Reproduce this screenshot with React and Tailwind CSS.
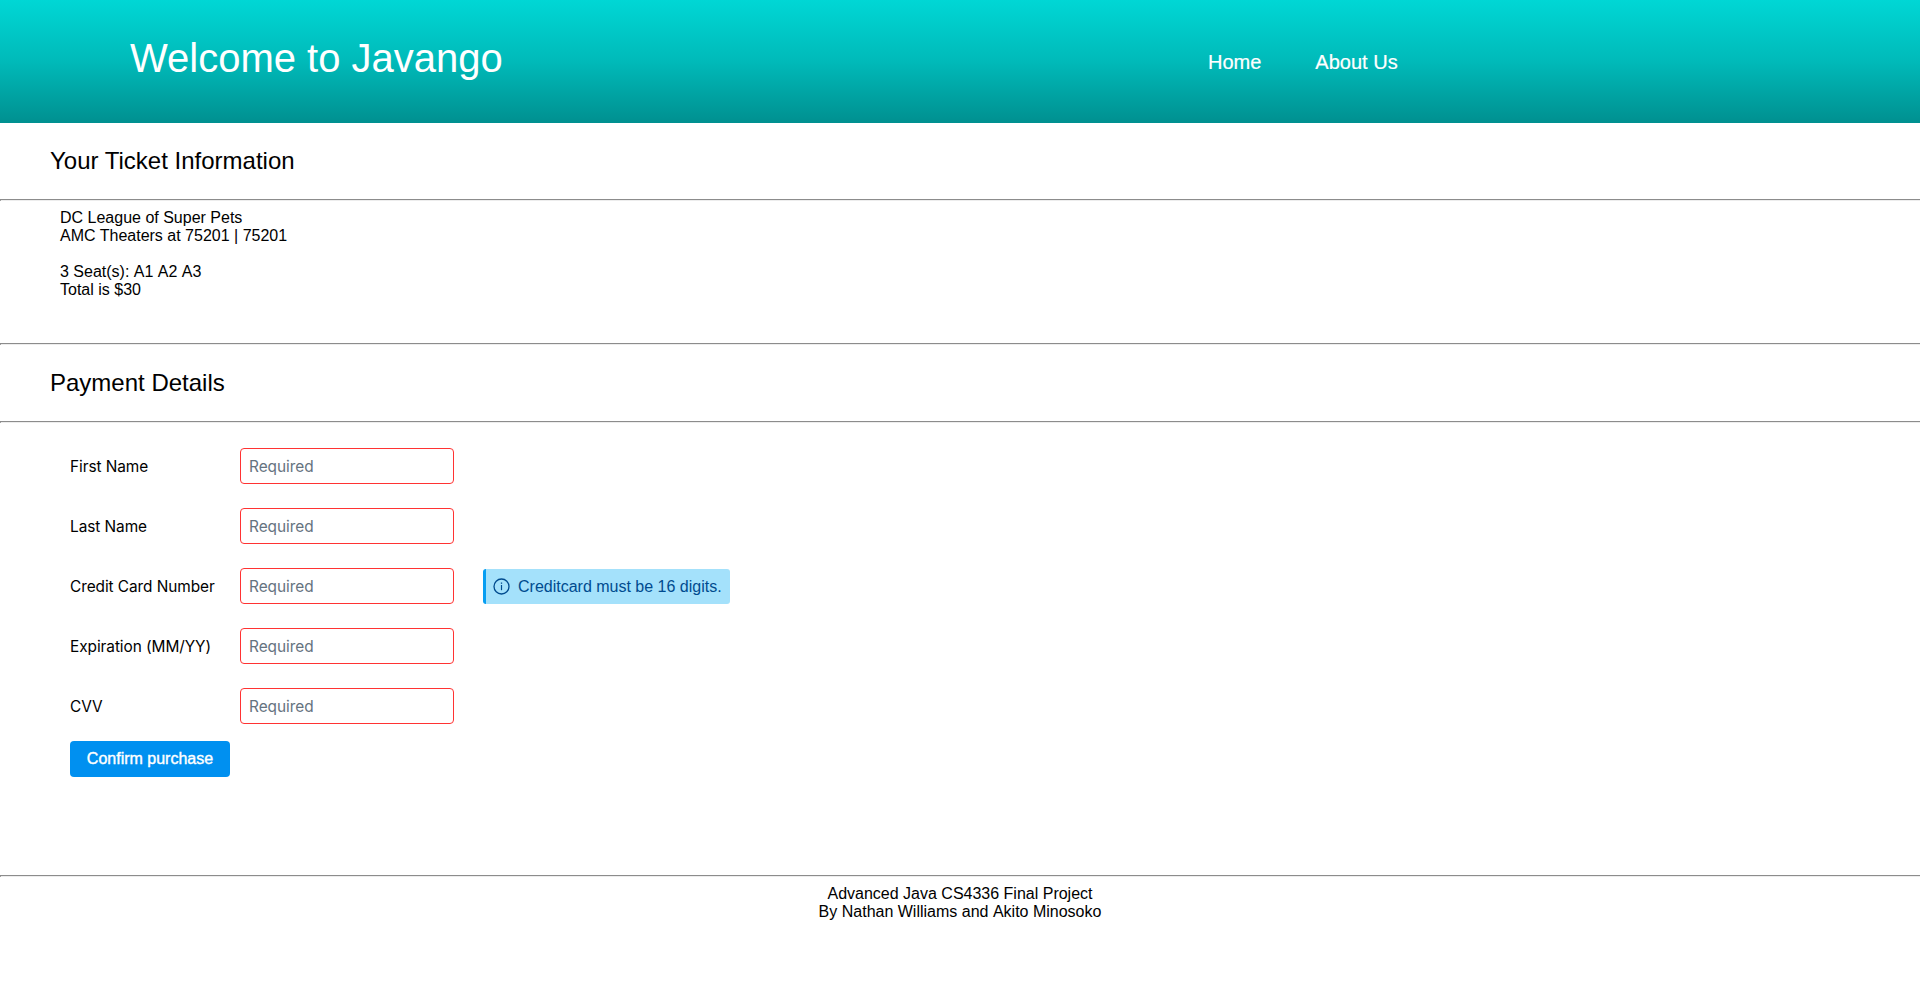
import React from "react";

function Rule() {
  return (
    <div>
      <div className="h-px bg-[#8c8c8c]" />
      <div className="h-px border-l border-[#a0a0a0] bg-[#ededed]" />
    </div>
  );
}

function InfoIcon() {
  return (
    <svg className="block h-[17px] w-[17px] shrink-0" viewBox="0 0 17 17" fill="none" stroke="#004b8f">
      <circle cx="8.5" cy="8.5" r="7.5" strokeWidth="1.3" />
      <path d="M8.5 7v5.2" strokeWidth="1.2" />
      <path d="M8.5 4.5v1.3" strokeWidth="1.3" />
    </svg>
  );
}

const fields = ["First Name", "Last Name", "Credit Card Number", "Expiration (MM/YY)", "CVV"];

function Field({ label }) {
  return (
    <div className="flex h-9 items-center">
      <label className="w-[170px] pt-0.5 font-['Inter',sans-serif] text-[15.4px] tracking-[-0.06px]">{label}</label>
      <input
        placeholder="Required"
        className="h-9 w-[214px] rounded-[4px] border border-[#ff3333] pl-2 pr-[7px] font-['Inter',sans-serif] text-[15.4px] tracking-[-0.04px] outline-none placeholder:text-[#657380]"
      />
      {label === "Credit Card Number" && (
        <div className="ml-[29px] flex h-[35px] w-[247px] items-center rounded-[3px] border-l-[3px] border-[#069ef2] bg-[#a4e1fb] pl-[7px] text-[#004b8f]">
          <InfoIcon />
          <span className="ml-2 whitespace-nowrap pt-px">Creditcard must be 16 digits.</span>
        </div>
      )}
    </div>
  );
}

export default function App() {
  return (
    <div className="min-h-[998px] overflow-hidden bg-white font-['Liberation_Sans',Arial,sans-serif] text-base leading-[18px] text-black">
      <header className="flex h-[123px] bg-gradient-to-b from-[#00d7d5] via-[#00bab9] to-[#009090] text-white">
        <h1 className="w-[1078px] pl-[130px] pt-[34px] text-[40px] leading-[48px]">Welcome to Javango</h1>
        <nav className="flex gap-[54px] pl-[130px] pt-[50px] text-xl leading-6 [-webkit-text-stroke:0.2px_white]">
          <a>Home</a>
          <a>About Us</a>
        </nav>
      </header>
      <h2 className="h-[76px] pl-[50px] pt-6 text-2xl leading-7">Your Ticket Information</h2>
      <Rule />
      <section className="h-[142px] pl-[60px] pt-2">
        <p>DC League of Super Pets</p>
        <p>AMC Theaters at 75201 | 75201</p>
        <p className="mt-[18px] [font-kerning:none]">3 Seat(s): A1 A2 A3</p>
        <p>Total is $30</p>
      </section>
      <Rule />
      <h2 className="h-[76px] pl-[50px] pt-6 text-2xl leading-7">Payment Details</h2>
      <Rule />
      <main className="h-[452px] pl-[70px] pt-[25px]">
        <div className="flex flex-col gap-6">
          {fields.map((f) => (
            <Field key={f} label={f} />
          ))}
        </div>
        <button className="mt-[17px] block h-9 w-40 rounded-[4px] bg-[#0090f0] text-center text-white [-webkit-text-stroke:0.4px_white]">
          Confirm purchase
        </button>
      </main>
      <Rule />
      <footer className="pt-2 text-center">
        <p>Advanced Java CS4336 Final Project</p>
        <p className="[font-kerning:none]">By Nathan Williams and Akito Minosoko</p>
      </footer>
    </div>
  );
}
